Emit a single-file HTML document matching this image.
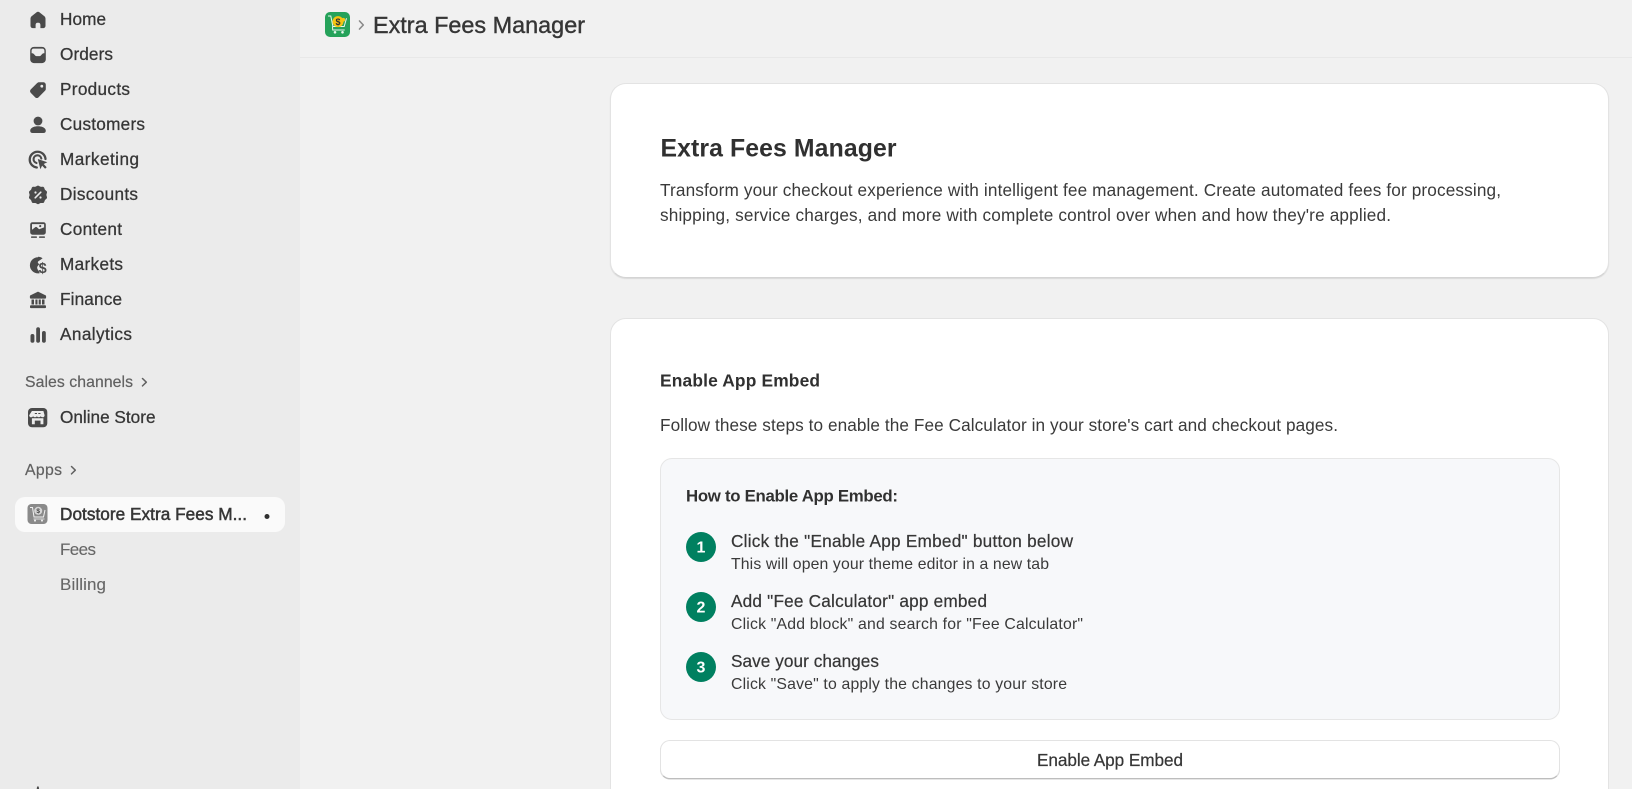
<!DOCTYPE html>
<html lang="en">
<head>
<meta charset="utf-8">
<title>Extra Fees Manager</title>
<style>
html,body{margin:0;padding:0;width:1632px;height:789px;overflow:hidden;background:#f1f1f1;}
.page{position:relative;width:1632px;height:789px;overflow:hidden;background:#f1f1f1;}
.side{position:absolute;left:0;top:0;width:300px;height:789px;background:#ebebeb;}
.pill{position:absolute;left:15px;top:497px;width:270px;height:35px;background:#fafafa;border-radius:10px;}
.top{position:absolute;left:300px;top:0;width:1332px;height:57px;border-bottom:1px solid #e8e8e8;}
.card{position:absolute;left:610px;width:999px;background:#fff;box-sizing:border-box;border:1px solid #e3e3e3;border-radius:16px;}
.c1{top:83px;height:195px;border-bottom-color:#d4d4d4;box-shadow:0 1px 1px rgba(0,0,0,.1);}
.c2{top:318px;height:500px;}
.box{position:absolute;left:660px;top:458px;width:900px;height:262px;box-sizing:border-box;background:#f7f8fa;border:1px solid #e6e6e6;border-radius:12px;}
.btn{position:absolute;left:660px;top:740px;width:900px;height:39px;box-sizing:border-box;background:#fff;border:1px solid #e3e3e3;border-bottom:1px solid #bdbdbd;border-radius:10px;box-shadow:0 .5px 0 #cccccc;}
svg.ov{position:absolute;left:0;top:0;filter:blur(.3px);}
text{font-family:"Liberation Sans",Arial,sans-serif;fill:#363636;white-space:pre;}
.nav{font-size:17.2px;stroke:#363636;stroke-width:.28px;}
.sec{font-size:15.8px;fill:#616161;stroke:#616161;stroke-width:.2px;}
.sub{font-size:17px;fill:#666666;stroke:#666666;stroke-width:.12px;}
.b{font-size:17.2px;fill:#3a3a3a;}
.t{font-size:17.2px;stroke:#363636;stroke-width:.22px;}
.d{font-size:15.8px;fill:#3a3a3a;}
.n{font-size:16px;font-weight:700;fill:#fff;text-anchor:middle;}
.ic{fill:#4a4a4a;}
</style>
</head>
<body>
<div class="page">
<div class="side"></div>
<div class="pill"></div>
<div class="top"></div>
<div class="card c1"></div>
<div class="card c2"></div>
<div class="box"></div>
<div class="btn"></div>

<svg class="ov" width="1632" height="789" viewBox="0 0 1632 789" xmlns="http://www.w3.org/2000/svg">
  <!-- nav labels -->
  <text class="nav" x="60" y="25" textLength="46">Home</text>
  <text class="nav" x="60" y="60" textLength="53">Orders</text>
  <text class="nav" x="60" y="95" textLength="70">Products</text>
  <text class="nav" x="60" y="130" textLength="85">Customers</text>
  <text class="nav" x="60" y="165" textLength="79">Marketing</text>
  <text class="nav" x="60" y="200" textLength="78">Discounts</text>
  <text class="nav" x="60" y="235" textLength="62">Content</text>
  <text class="nav" x="60" y="270" textLength="63">Markets</text>
  <text class="nav" x="60" y="305" textLength="62">Finance</text>
  <text class="nav" x="60" y="340" textLength="72">Analytics</text>
  <text class="sec" x="25" y="387" textLength="108">Sales channels</text>
  <path d="M142.500 378.500l3.800 3.700-3.800 3.700" fill="none" stroke="#616161" stroke-width="1.500" stroke-linecap="round" stroke-linejoin="round"/>
  <text class="nav" x="60" y="423" textLength="95.500">Online Store</text>
  <text class="sec" x="25" y="475" textLength="37">Apps</text>
  <path d="M71.500 466.500l3.800 3.700-3.800 3.700" fill="none" stroke="#616161" stroke-width="1.500" stroke-linecap="round" stroke-linejoin="round"/>
  <text class="nav" x="60" y="520" textLength="187" style="stroke-width:.5px">Dotstore Extra Fees M...</text>
  <circle cx="267" cy="516.500" r="2.500" fill="#303030"/>
  <text class="sub" x="60" y="555" textLength="36">Fees</text>
  <text class="sub" x="60" y="590" textLength="46">Billing</text>

  <!-- Home -->
  <g transform="translate(28,10)"><path class="ic" d="M10 1.800c.5 0 1 .2 1.400.5l4.700 3.700c.9.7 1.400 1.600 1.400 2.700v7c0 1.400-1 2.400-2.400 2.400h-2.700v-3.200c0-1.300-.8-2.200-1.700-2.200h-1.400c-.9 0-1.700.9-1.700 2.200v3.200H4.900c-1.400 0-2.400-1-2.400-2.400v-7c0-1.100.5-2 1.400-2.700l4.700-3.700c.4-.3.900-.5 1.400-.5z"/></g>
  <!-- Orders -->
  <g transform="translate(28,45)"><path class="ic" fill-rule="evenodd" d="M6 1.900h8c2.200 0 3.800 1.600 3.800 3.800v8.600c0 2.200-1.600 3.800-3.800 3.800H6c-2.200 0-3.800-1.600-3.800-3.800V5.700c0-2.200 1.600-3.800 3.800-3.800zM3.900 8.200c.7 0 1.300.2 1.800.7l1.600 1.700c.3.300.6.500 1 .5h3.400c.4 0 .7-.2 1-.5l1.600-1.700c.5-.5 1.100-.7 1.800-.7h.3V5.600c0-1.100-.8-2-2-2H5.600c-1.200 0-2 .9-2 2v2.600z"/></g>
  <!-- Products -->
  <g transform="translate(28,80)"><path class="ic" fill-rule="evenodd" d="M11 2.200h4.300c1.400 0 2.500 1.100 2.500 2.500V9c0 .7-.3 1.300-.8 1.800l-6.400 6.400c-1 1-2.500 1-3.500 0l-4.300-4.300c-1-1-1-2.500 0-3.500L9.200 3c.5-.5 1.100-.8 1.800-.8zM13.800 7.600a1.400 1.400 0 1 0 0-2.800 1.400 1.400 0 0 0 0 2.800z"/></g>
  <!-- Customers -->
  <g transform="translate(28,115)"><circle class="ic" cx="10" cy="6" r="4.400"/><path class="ic" d="M2.200 15.700c0-2.700 3.400-4.500 7.800-4.500s7.800 1.800 7.800 4.500c0 1.500-1 2.300-2.400 2.300H4.600c-1.400 0-2.400-.8-2.400-2.300z"/></g>
  <!-- Marketing -->
  <g transform="translate(28,150)"><path fill="none" stroke="#4a4a4a" stroke-width="2.300" stroke-linecap="round" d="M8.800 17.500A7.900 7.900 0 1 1 17.500 9"/><path fill="none" stroke="#4a4a4a" stroke-width="2.100" stroke-linecap="round" d="M8.500 13A3.900 3.900 0 1 1 13.300 8.500"/><path class="ic" d="M9.800 9l9.500 3.200-3.600 1.800 3 3.200-1.600 1.500-3-3.100-1.700 3.700z"/></g>
  <!-- Discounts -->
  <g transform="translate(28,185)"><path class="ic" d="M10 .6c1 0 1.700 1 2.700 1.200 1 .2 2.200-.3 3 .3.800.6.700 1.800 1.300 2.600.6.800 1.800 1.200 2 2.200.2 1-.6 1.900-.6 3s.8 2 .6 3c-.2 1-1.400 1.400-2 2.200-.6.800-.5 2-1.300 2.600-.8.600-2 .1-3 .3-1 .2-1.700 1.200-2.700 1.200s-1.700-1-2.700-1.200c-1-.2-2.200.3-3-.3-.8-.6-.7-1.800-1.300-2.600-.6-.8-1.800-1.200-2-2.200-.2-1 .6-1.900.6-3s-.8-2-.6-3c.2-1 1.400-1.400 2-2.200.6-.8.500-2 1.300-2.600.8-.6 2-.1 3-.3C8.300 1.600 9 .6 10 .6z"/><path d="M7.200 12.800l5.600-5.600" stroke="#ebebeb" stroke-width="1.600" stroke-linecap="round"/><circle cx="7.500" cy="7.500" r="1.100" fill="#ebebeb"/><circle cx="12.500" cy="12.500" r="1.100" fill="#ebebeb"/></g>
  <!-- Content -->
  <g transform="translate(28,220)"><path class="ic" fill-rule="evenodd" d="M4.500 2.300h11c1.300 0 2.300 1 2.300 2.300v7.800c0 1.300-1 2.300-2.300 2.300h-11c-1.300 0-2.300-1-2.300-2.300V4.600c0-1.300 1-2.300 2.300-2.300zM4 4.100v5.600l3.200-2.500c.6-.5 1.200-.4 1.700 0l2.200 2 5-1.800V4.100zM12.500 5a1.100 1.100 0 1 0 .1 2.100A1.100 1.100 0 0 0 12.500 5z"/><rect class="ic" x="3" y="16.400" width="6" height="1.500" rx=".7"/><rect class="ic" x="11" y="16.400" width="6" height="1.500" rx=".7"/></g>
  <!-- Markets -->
  <g transform="translate(28,255)"><path class="ic" d="M10 1.700c1.700 0 3.300.5 4.600 1.500l-2.700 2c-.8.600-2.100 1-2.100 2.100 0 1 1 1.200 1.400 2l-1.600 2c-.7 1-.5 2.200.1 3.200l1.200 1.700c.3.500.6 1.100.7 2-.5.100-1 .2-1.600.2a8.100 8.100 0 0 1 0-16.200z"/><text x="10.600" y="17.800" style="font-size:14.500px;font-weight:700;fill:#4a4a4a">$</text></g>
  <!-- Finance -->
  <g transform="translate(28,290)"><path class="ic" d="M10 1.600l7.400 3.600c.5.200.7.600.7 1.100v1.300c0 .6-.5 1-1 1H2.900c-.6 0-1-.4-1-1V6.300c0-.5.2-.9.7-1.100z"/><rect class="ic" x="3.500" y="9.500" width="2.500" height="5"/><rect class="ic" x="7.400" y="9.500" width="2.100" height="5"/><rect class="ic" x="10.700" y="9.500" width="2.100" height="5"/><rect class="ic" x="14" y="9.500" width="2.500" height="5"/><rect class="ic" x="2" y="15.300" width="16" height="2.800" rx=".9"/></g>
  <!-- Analytics -->
  <g transform="translate(28,325)"><rect class="ic" x="2.500" y="9" width="3.900" height="8.800" rx="1.900"/><rect class="ic" x="8.200" y="2.200" width="3.800" height="15.600" rx="1.900"/><rect class="ic" x="14" y="6" width="3.800" height="11.800" rx="1.900"/></g>

  <!-- Online store icon -->
  <g transform="translate(28,408)">
    <rect width="19.300" height="19.300" rx="4" fill="#4a4a4a"/>
    <path d="M3.900 3h11.500l1.200 4.200c0 1.200-.9 2.100-2 2.100-.8 0-1.500-.4-1.900-1-.4.600-1.100 1-1.900 1s-1.500-.4-1.900-1c-.4.600-1.100 1-1.900 1s-1.500-.4-1.900-1c-.4.600-1.100 1-1.900 1-1.100 0-2-.9-2-2.100z" fill="#ebebeb"/>
    <path d="M3.900 10.300h11.500v6H12.500v-3.700H6.800v3.700H3.900z" fill="#ebebeb"/>
    <path d="M6.800 5.500h2.200M10.300 5.500h2.200" stroke="#4a4a4a" stroke-width="1.100"/>
  </g>

  <!-- Dotstore grey icon -->
  <g transform="translate(27.500,504)">
    <rect width="20" height="20" rx="4" fill="#8a8a8a"/>
    <path d="M2.500 3.500h2.500l1.500 9.500h9.500l1.500-7" fill="none" stroke="#f1f1f1" stroke-width="1"/>
    <path d="M6 15h11" stroke="#f1f1f1" stroke-width=".8"/>
    <circle cx="10.700" cy="6.800" r="4" fill="#d6d6d6"/>
    <text x="10.700" y="9.200" text-anchor="middle" style="font-size:6.500px;font-weight:700;fill:#444">$</text>
    <circle cx="7.500" cy="16.600" r="1" fill="#f1f1f1"/><circle cx="14.500" cy="16.600" r="1" fill="#f1f1f1"/>
  </g>

  <!-- bottom peek of settings icon -->
  <path d="M36.700 789l.4-2.500h1.600l.4 2.500z" fill="#4a4a4a"/>

  <!-- App logo -->
  <g transform="translate(325,12)">
    <rect width="25" height="25" rx="5" fill="#25a25a"/>
    <path d="M3 4h2.800l2.100 10.500h11.300l2.300-8.300" fill="none" stroke="#e8f6ee" stroke-width="1"/>
    <path d="M7.500 14.500l.2 3.500h12" fill="none" stroke="#e8f6ee" stroke-width="1"/>
    <circle cx="13" cy="9.600" r="5.500" fill="#f6c412"/>
    <text x="13" y="12.800" text-anchor="middle" style="font-size:9px;font-weight:700;fill:#2f2f2f">$</text>
    <circle cx="18.300" cy="7.800" r="1.900" fill="#f6c412"/>
    <circle cx="10" cy="20.300" r="1.300" fill="#e8f6ee"/><circle cx="17.500" cy="20.300" r="1.300" fill="#e8f6ee"/>
  </g>
  <path d="M359.500 21l3.800 4-3.800 4" fill="none" stroke="#8a8a8a" stroke-width="1.600" stroke-linecap="round" stroke-linejoin="round"/>
  <text x="373" y="33" textLength="212" style="font-size:23.400px;stroke:#363636;stroke-width:.4px">Extra Fees Manager</text>

  <!-- Card 1 -->
  <text x="660.500" y="156.500" textLength="236" style="font-size:24.800px;font-weight:700;fill:#303030">Extra Fees Manager</text>
  <text class="b" x="660" y="196" textLength="841">Transform your checkout experience with intelligent fee management. Create automated fees for processing,</text>
  <text class="b" x="660" y="221" textLength="731">shipping, service charges, and more with complete control over when and how they're applied.</text>

  <!-- Card 2 -->
  <text x="660" y="386.500" textLength="160" style="font-size:17.400px;font-weight:700;fill:#303030">Enable App Embed</text>
  <text class="b" x="660" y="431" textLength="678">Follow these steps to enable the Fee Calculator in your store's cart and checkout pages.</text>
  <text x="686" y="501.500" textLength="212" style="font-size:16.800px;font-weight:700;fill:#303030">How to Enable App Embed:</text>

  <circle cx="701" cy="547" r="15" fill="#008060"/>
  <text class="n" x="701" y="552.500">1</text>
  <text class="t" x="731" y="547" textLength="342">Click the "Enable App Embed" button below</text>
  <text class="d" x="731" y="569" textLength="318">This will open your theme editor in a new tab</text>

  <circle cx="701" cy="607" r="15" fill="#008060"/>
  <text class="n" x="701" y="612.500">2</text>
  <text class="t" x="731" y="607" textLength="256">Add "Fee Calculator" app embed</text>
  <text class="d" x="731" y="629" textLength="352">Click "Add block" and search for "Fee Calculator"</text>

  <circle cx="701" cy="667" r="15" fill="#008060"/>
  <text class="n" x="701" y="672.500">3</text>
  <text class="t" x="731" y="667" textLength="148">Save your changes</text>
  <text class="d" x="731" y="689" textLength="336">Click "Save" to apply the changes to your store</text>

  <text class="t" x="1037" y="766" textLength="146">Enable App Embed</text>
</svg>
</div>
</body>
</html>
